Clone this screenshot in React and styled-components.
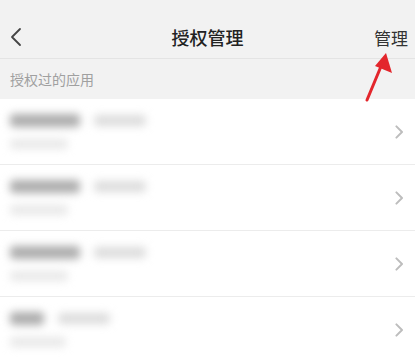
import styled, { createGlobalStyle } from "styled-components";

const Global = createGlobalStyle`
  html, body {
    margin: 0;
    padding: 0;
    background: #f2f2f2;
    font-family: "Noto Sans CJK SC", "Noto Sans", sans-serif;
  }
`;

const Page = styled.div`
  position: relative;
  width: 415px;
  height: 363px;
  overflow: hidden;
  background: #f2f2f2;
`;

const NavBar = styled.div`
  height: 59px;
  padding-top: 16px;
  box-sizing: border-box;
  display: grid;
  grid-template-columns: 60px 1fr 60px;
  align-items: center;
  border-bottom: 1px solid #e4e4e4;
`;

const Back = styled.div`
  padding-left: 10px;
  display: flex;
  align-items: center;
`;

const Title = styled.div`
  text-align: center;
  font-size: 18px;
  font-weight: 500;
  color: #222;
`;

const Action = styled.div`
  text-align: right;
  padding-right: 7px;
  font-size: 17px;
  color: #333;
`;

const SectionLabel = styled.div`
  height: 40px;
  padding-left: 10px;
  display: flex;
  align-items: center;
  font-size: 14px;
  color: #a0a0a0;
`;

const List = styled.div`
  background: #fff;
`;

const Row = styled.div`
  height: 66px;
  display: flex;
  align-items: center;
  padding: 0 12px 0 10px;
  border-bottom: 1px solid ${(p) => (p.$last ? "transparent" : "#ececec")};
  box-sizing: border-box;
`;

const Info = styled.div`
  flex: 1;
  display: flex;
  flex-direction: column;
  gap: 12px;
  filter: blur(4px);
`;

const Line = styled.div`
  display: flex;
  align-items: center;
  gap: 14px;
`;

const Blob = styled.div`
  height: ${(p) => p.$h || 13}px;
  width: ${(p) => p.$w}px;
  border-radius: 4px;
  background: ${(p) => p.$c};
`;

const rows = [
  { name: 70, tag: 52, sub: 58 },
  { name: 70, tag: 52, sub: 58 },
  { name: 70, tag: 52, sub: 58 },
  { name: 34, tag: 52, sub: 56 },
];

const Chevron = ({ color = "#bdbdbd", size = 14, width = 1.4 }) => (
  <svg width={size * 0.6} height={size} viewBox="0 0 6 10" fill="none">
    <path d="M1 1l4 4-4 4" stroke={color} strokeWidth={width} strokeLinecap="round" strokeLinejoin="round" />
  </svg>
);

const Arrow = styled.svg`
  position: absolute;
  left: 358px;
  top: 48px;
`;

export default function App() {
  return (
    <Page>
      <Global />
      <NavBar>
        <Back>
          <svg width="12" height="20" viewBox="0 0 12 20" fill="none">
            <path d="M10 2L2 10l8 8" stroke="#444" strokeWidth="1.8" strokeLinecap="round" strokeLinejoin="round" />
          </svg>
        </Back>
        <Title>授权管理</Title>
        <Action>管理</Action>
      </NavBar>
      <SectionLabel>授权过的应用</SectionLabel>
      <List>
        {rows.map((r, i) => (
          <Row key={i} $last={i === rows.length - 1}>
            <Info>
              <Line>
                <Blob $w={r.name} $c="#acacac" />
                <Blob $w={r.tag} $h={11} $c="#dcdcdc" />
              </Line>
              <Blob $w={r.sub} $h={10} $c="#e8e8e8" />
            </Info>
            <Chevron />
          </Row>
        ))}
      </List>
      <Arrow width="40" height="60" viewBox="0 0 40 60">
        <line x1="9" y1="52" x2="24" y2="16" stroke="#e3262c" strokeWidth="3" strokeLinecap="round" />
        <polygon points="28,5 34,25 17,18" fill="#e3262c" />
      </Arrow>
    </Page>
  );
}
